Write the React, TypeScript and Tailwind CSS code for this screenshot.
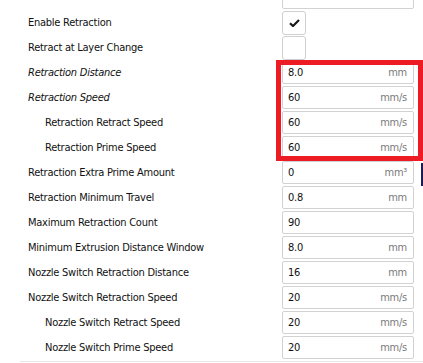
import React from "react"

type Row = {
  label: string
  indent?: boolean
  italic?: boolean
  check?: boolean
  checked?: boolean
  value?: string
  unit?: string
}

const rows: Row[] = [
  { label: "Enable Retraction", check: true, checked: true },
  { label: "Retract at Layer Change", check: true },
  { label: "Retraction Distance", italic: true, value: "8.0", unit: "mm" },
  { label: "Retraction Speed", italic: true, value: "60", unit: "mm/s" },
  { label: "Retraction Retract Speed", indent: true, value: "60", unit: "mm/s" },
  { label: "Retraction Prime Speed", indent: true, value: "60", unit: "mm/s" },
  { label: "Retraction Extra Prime Amount", value: "0", unit: "mm³" },
  { label: "Retraction Minimum Travel", value: "0.8", unit: "mm" },
  { label: "Maximum Retraction Count", value: "90" },
  { label: "Minimum Extrusion Distance Window", value: "8.0", unit: "mm" },
  { label: "Nozzle Switch Retraction Distance", value: "16", unit: "mm" },
  { label: "Nozzle Switch Retraction Speed", value: "20", unit: "mm/s" },
  { label: "Nozzle Switch Retract Speed", indent: true, value: "20", unit: "mm/s" },
  { label: "Nozzle Switch Prime Speed", indent: true, value: "20", unit: "mm/s" },
]

function CheckMark() {
  return (
    <svg width="11" height="8" viewBox="0 0 11 8" className="text-[#1a1a1a]">
      <path d="M1 4.2 L4 7 L10 1" fill="none" stroke="currentColor" strokeWidth={2.2} />
    </svg>
  )
}

function SettingRow({ row }: { row: Row }) {
  return (
    <div className="flex h-[25px] items-center">
      <div
        className={`flex-1 truncate text-[#111] ${row.indent ? "pl-[45px]" : "pl-[28px]"} ${row.italic ? "italic" : ""}`}
      >
        {row.label}
      </div>
      <div className="w-[132px]">
        {row.check ? (
          <div className="flex h-6 w-6 items-center justify-center rounded-[3px] border border-[#cfcfcf] bg-white">
            {row.checked && <CheckMark />}
          </div>
        ) : (
          <div className="flex h-[23px] items-center justify-between rounded-[2px] border border-[#d2d2d2] bg-white pl-[5px] pr-[6px]">
            <span className="text-[#111]">{row.value}</span>
            <span className="text-[#7a7a7a]">{row.unit}</span>
          </div>
        )}
      </div>
      <div className="w-[9px]" />
    </div>
  )
}

export default function App() {
  return (
    <div
      className="relative h-[363px] w-[423px] overflow-hidden bg-white text-[11px] leading-none tracking-[-0.25px]"
      style={{ fontFamily: '"DejaVu Sans Condensed", "Liberation Sans", sans-serif' }}
    >
      {/* previous row, cut off at the top */}
      <div className="-mt-[15px] flex h-[25px] items-center">
        <div className="flex-1" />
        <div className="h-[23px] w-[132px] rounded-[2px] border border-[#d2d2d2]" />
        <div className="w-[9px]" />
      </div>

      {rows.map((r) => (
        <SettingRow key={r.label} row={r} />
      ))}

      <div className="ml-[20px] mt-[1px] border-t border-[#e6e6e6]" />

      {/* annotation box */}
      <div className="absolute left-[276px] top-[60px] h-[101px] w-[147px] border-[5px] border-[#ed1c24]" />
      <div className="absolute left-[421px] top-[163px] h-[23px] w-[2px] bg-[#1c1c5c]" />
    </div>
  )
}
